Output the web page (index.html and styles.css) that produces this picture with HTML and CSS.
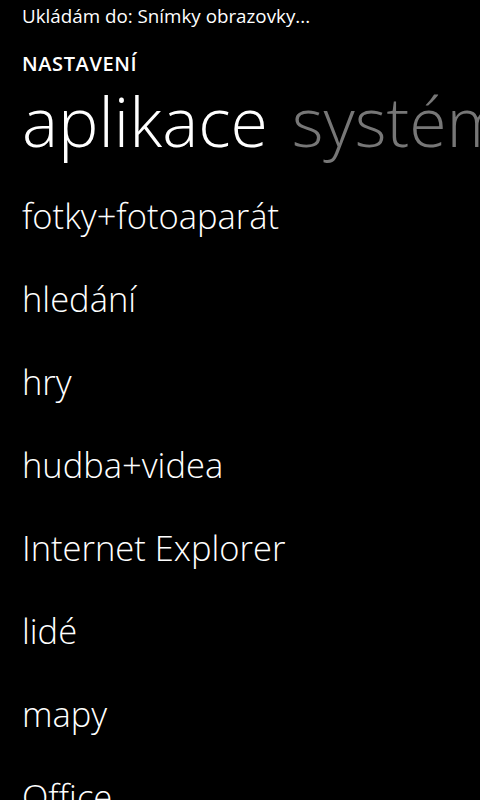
FILE: index.html
```html
<!DOCTYPE html>
<html lang="cs">
<head>
<meta charset="utf-8">
<title>Nastavení</title>
<link rel="stylesheet" href="styles.css">
</head>
<body>
<div class="screen">
  <div class="status">Ukládám do: Snímky obrazovky...</div>
  <div class="app-title">NASTAVENÍ</div>
  <div class="pivot">
    <span class="pivot-item active">aplikace</span>
    <span class="pivot-item">systém</span>
  </div>
  <ul class="list">
    <li class="item">fotky+fotoaparát</li>
    <li class="item">hledání</li>
    <li class="item">hry</li>
    <li class="item">hudba+videa</li>
    <li class="item">Internet Explorer</li>
    <li class="item">lidé</li>
    <li class="item">mapy</li>
    <li class="item">Office</li>
  </ul>
</div>
</body>
</html>
```
FILE: styles.css
```css
html, body {
  margin: 0;
  padding: 0;
  background: #000;
}
.screen {
  width: 480px;
  height: 800px;
  overflow: hidden;
  background: #000;
  color: #fff;
  font-family: "Open Sans", "Noto Sans", sans-serif;
  padding-left: 22px;
  box-sizing: border-box;
}
.status {
  font-size: 18.8px;
  line-height: 24px;
  padding-top: 4px;
  font-weight: 400;
}
.app-title {
  font-size: 20px;
  font-weight: 600;
  letter-spacing: 0.6px;
  line-height: 27px;
  margin-top: 21.5px;
}
.pivot {
  display: flex;
  gap: 24px;
  white-space: nowrap;
  font-size: 68px;
  font-weight: 300;
  line-height: 88px;
}
.pivot-item { color: #777; }
.pivot-item.active { color: #fff; }
.list {
  list-style: none;
  margin: 9.5px 0 0;
  padding: 0;
}
.item {
  font-size: 34.5px;
  font-weight: 300;
  line-height: 83px;
  white-space: nowrap;
}
```
